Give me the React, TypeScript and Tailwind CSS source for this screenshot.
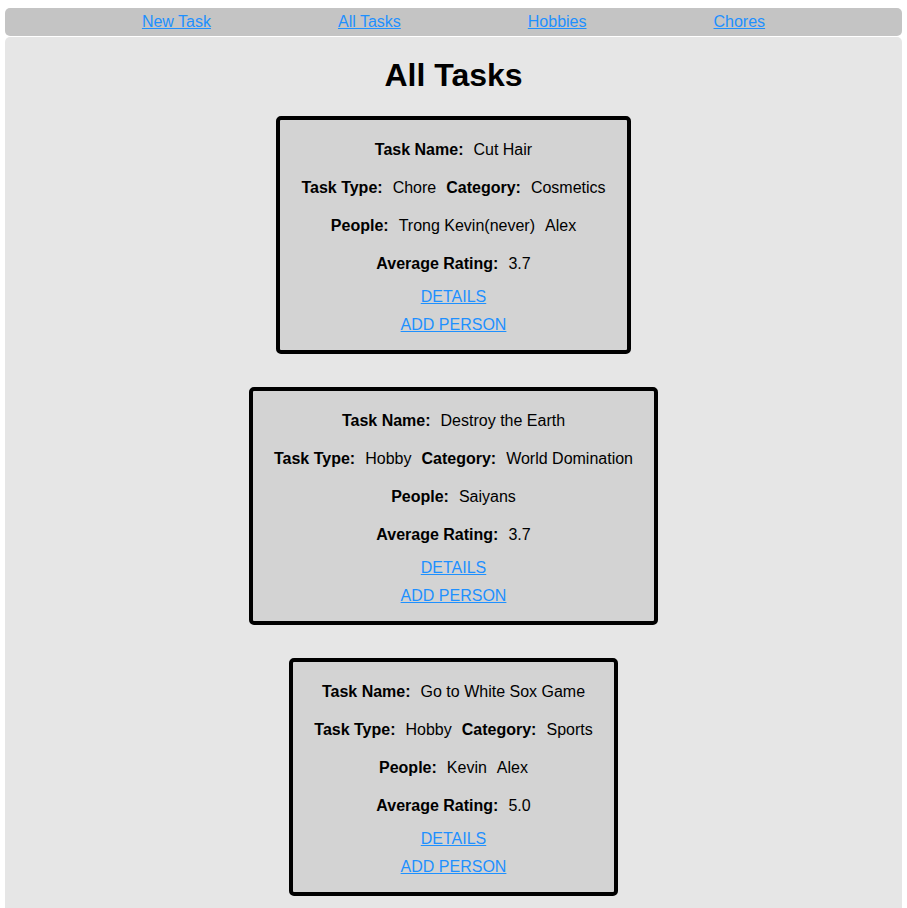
import React from "react";

type Task = {
  name: string;
  type: string;
  category: string;
  people: string[];
  rating: string;
};

const tasks: Task[] = [
  { name: "Cut Hair", type: "Chore", category: "Cosmetics", people: ["Trong Kevin(never)", "Alex"], rating: "3.7" },
  { name: "Destroy the Earth", type: "Hobby", category: "World Domination", people: ["Saiyans"], rating: "3.7" },
  { name: "Go to White Sox Game", type: "Hobby", category: "Sports", people: ["Kevin", "Alex"], rating: "5.0" },
];

function Card({ t }: { t: Task }) {
  return (
    <div className="border-4 border-black rounded-[5px] bg-[#d3d3d3] px-[21px] pt-[11px] pb-[11px] flex flex-col items-center text-[16px] text-black">
      <div className="h-[38px] flex items-center gap-[10px] whitespace-nowrap">
        <span className="font-bold">Task Name:</span>
        <span>{t.name}</span>
      </div>
      <div className="h-[38px] flex items-center gap-[10px] whitespace-nowrap">
        <span className="font-bold">Task Type:</span>
        <span>{t.type}</span>
        <span className="font-bold">Category:</span>
        <span>{t.category}</span>
      </div>
      <div className="h-[38px] flex items-center gap-[10px] whitespace-nowrap">
        <span className="font-bold">People:</span>
        {t.people.map((p) => (
          <span key={p}>{p}</span>
        ))}
      </div>
      <div className="h-[38px] flex items-center gap-[10px] whitespace-nowrap">
        <span className="font-bold">Average Rating:</span>
        <span>{t.rating}</span>
      </div>
      <div className="h-[28px] flex items-center">
        <a href="#" className="text-[#1e90ff] underline">DETAILS</a>
      </div>
      <div className="h-[28px] flex items-center">
        <a href="#" className="text-[#1e90ff] underline">ADD PERSON</a>
      </div>
    </div>
  );
}

export default function App() {
  return (
    <div className="min-h-[908px] bg-white px-[5px] pt-[8px]" style={{ fontFamily: '"Liberation Sans", Arial, sans-serif' }}>
      <nav className="h-[28px] bg-[#c4c4c4] rounded-[5px] flex items-center justify-center gap-[127px] text-[16px]">
        <a href="#" className="text-[#1e90ff] underline">New Task</a>
        <a href="#" className="text-[#1e90ff] underline">All Tasks</a>
        <a href="#" className="text-[#1e90ff] underline">Hobbies</a>
        <a href="#" className="text-[#1e90ff] underline">Chores</a>
      </nav>
      <main className="mt-[1px] bg-[#e6e6e6] rounded-[5px] pt-[20px] pb-[40px] flex flex-col items-center min-h-[871px]">
        <h1 className="text-[32px] leading-[37px] font-bold text-black">All Tasks</h1>
        <div className="mt-[22px] flex flex-col items-center gap-[33px]">
          {tasks.map((t) => (
            <Card key={t.name} t={t} />
          ))}
        </div>
      </main>
    </div>
  );
}
